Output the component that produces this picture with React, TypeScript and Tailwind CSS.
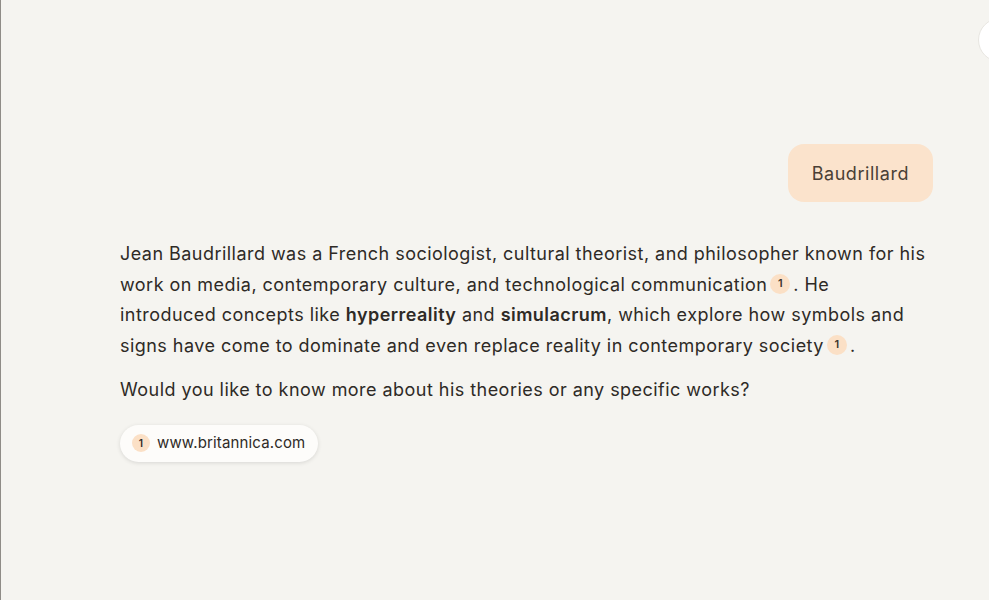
import React from 'react';

function Cite({ n }: { n: number }) {
  return (
    <span className="mx-[3px] inline-flex h-[20px] w-[20px] translate-y-[-2px] items-center justify-center rounded-full bg-[#fbe0c6] align-middle text-[11px] font-semibold tracking-normal text-[#3b332c]">
      {n}
    </span>
  );
}

export default function App() {
  return (
    <div
      className="relative h-[600px] w-[989px] overflow-hidden border-l border-[#8f8c87] bg-[#f5f4f0] text-[#2e2a26]"
      style={{ fontFamily: 'Inter, "Noto Sans", sans-serif' }}
    >
      <div className="absolute right-[-33px] top-[18px] h-[44px] w-[44px] rounded-full border border-[#e8e6e1] bg-white" />

      <div className="flex justify-end pr-[56px] pt-[144px]">
        <div className="flex h-[58px] items-center rounded-[16px] bg-[#fbe3cc] px-[24px] text-[18px] tracking-[0.55px] text-[#4a3f35]">
          Baudrillard
        </div>
      </div>

      <div className="pl-[119px] pt-[37px] text-[18px] leading-[30.5px] tracking-[0.46px]">
        <p className="w-[840px]">
          Jean Baudrillard was a French sociologist, cultural theorist, and philosopher known for his
          <br />
          work on media, contemporary culture, and technological communication
          <Cite n={1} />. He
          <br />
          introduced concepts like <b className="font-semibold">hyperreality</b> and{' '}
          <b className="font-semibold">simulacrum</b>, which explore how symbols and
          <br />
          signs have come to dominate and even replace reality in contemporary society
          <Cite n={1} />.
        </p>
        <p className="mt-[14px]">Would you like to know more about his theories or any specific works?</p>

        <div className="mt-[19px] flex">
          <div className="flex h-[37px] items-center gap-[7px] rounded-full bg-[#fdfcfa] pl-[12px] pr-[13px] text-[15px] tracking-[0.15px] text-[#2e2a26] shadow-[0_1px_4px_rgba(0,0,0,0.12)]">
            <span className="inline-flex h-[18px] w-[18px] items-center justify-center rounded-full bg-[#fbe0c6] text-[10px] font-semibold">
              1
            </span>
            www.britannica.com
          </div>
        </div>
      </div>
    </div>
  );
}
